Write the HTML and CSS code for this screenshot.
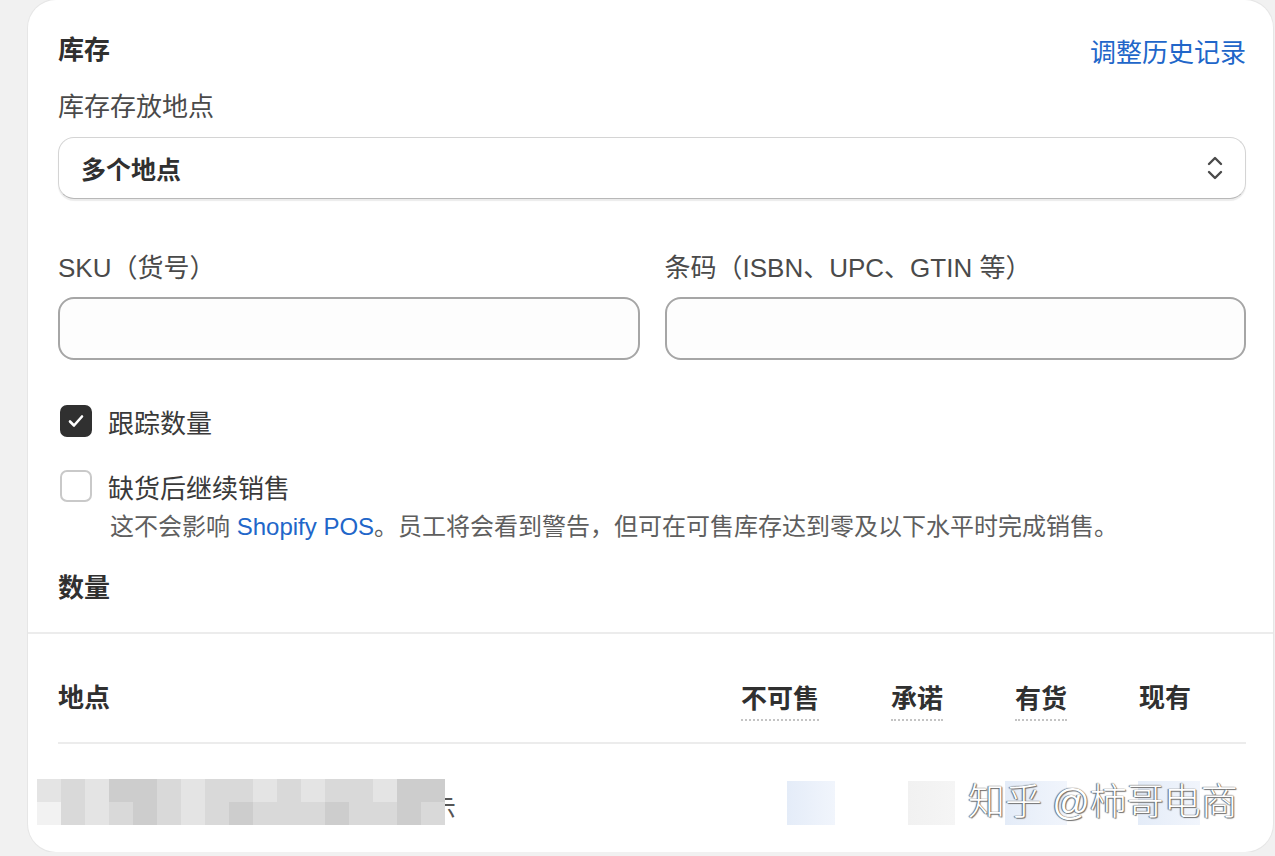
FILE: index.html
```html
<!DOCTYPE html>
<html lang="zh-CN">
<head>
  <meta charset="UTF-8">
  <title>库存</title>
  <meta name="viewport" content="width=device-width, initial-scale=1">
  <link rel="stylesheet" href="styles.css">
</head>
<body>
  <div class="card">
    <div class="section">
      <div class="card-head">
        <h2>库存</h2>
        <a href="#" class="link">调整历史记录</a>
      </div>

      <label class="field-label" for="location">库存存放地点</label>
      <div class="select" id="location">
        <span>多个地点</span>
        <svg class="chevron" width="20" height="30" viewBox="0 0 20 30">
          <path d="M4 11 L10 5 L16 11" fill="none" stroke="#4a4a4a" stroke-width="2.4" stroke-linecap="round" stroke-linejoin="round"/>
          <path d="M4 19 L10 25 L16 19" fill="none" stroke="#4a4a4a" stroke-width="2.4" stroke-linecap="round" stroke-linejoin="round"/>
        </svg>
      </div>

      <div class="field-row">
        <div class="field">
          <label class="field-label" for="sku">SKU（货号）</label>
          <input type="text" id="sku" class="text-input">
        </div>
        <div class="field">
          <label class="field-label" for="barcode">条码（ISBN、UPC、GTIN 等）</label>
          <input type="text" id="barcode" class="text-input">
        </div>
      </div>

      <div class="check-row first">
        <span class="box checked">
          <svg width="24" height="24" viewBox="0 0 24 24">
            <path d="M6 12.5 L10 16.5 L18 7.5" fill="none" stroke="#fff" stroke-width="2.6" stroke-linecap="round" stroke-linejoin="round"/>
          </svg>
        </span>
        <span class="check-label">跟踪数量</span>
      </div>

      <div class="check-row second">
        <span class="box"></span>
        <span class="check-label">缺货后继续销售</span>
      </div>
      <p class="help">这不会影响 <a href="#" class="link">Shopify POS</a>。员工将会看到警告，但可在可售库存达到零及以下水平时完成销售。</p>

      <h3>数量</h3>
    </div>

    <div class="table">
      <div class="table-head">
        <div class="col-name">地点</div>
        <div class="col"><span class="dotted">不可售</span></div>
        <div class="col"><span class="dotted">承诺</span></div>
        <div class="col"><span class="dotted">有货</span></div>
        <div class="col last">现有</div>
      </div>
      <div class="table-row">
        <div class="mosaic">
          <i class="c1"></i><i class="c2"></i><i class="c1"></i><i class="c3"></i><i class="c3"></i><i class="c2"></i><i class="c1"></i><i class="c2"></i><i class="c2"></i><i class="c1"></i><i class="c2"></i><i class="c1"></i><i class="c2"></i><i class="c2"></i><i class="c1"></i><i class="c3"></i><i class="c3"></i>
          <i class="c0"></i><i class="c2"></i><i class="c1"></i><i class="c2"></i><i class="c3"></i><i class="c2"></i><i class="c1"></i><i class="c2"></i><i class="c3"></i><i class="c2"></i><i class="c2"></i><i class="c2"></i><i class="c3"></i><i class="c2"></i><i class="c2"></i><i class="c3"></i><i class="c2"></i>
        </div>
        <span class="cut">示</span>
        <div class="blur blue b1"></div>
        <div class="blur grey b2"></div>
        <div class="blur blue b3"></div>
        <div class="blur blue b4"></div>
      </div>
    </div>

    <div class="watermark">知乎 @柿哥电商</div>
  </div>
</body>
</html>
```

FILE: styles.css
```css
body {
  margin: 0;
  background-color: #f1f1f1;
  font-family: "Liberation Sans", "Noto Sans CJK SC", sans-serif;
  color: #303030;
}
.card {
  position: relative;
  margin-left: 28px;
  width: 1245px;
  height: 852px;
  background-color: #fff;
  border-radius: 28px;
  box-shadow: 0 0 0 1px #e6e6e6;
  overflow: hidden;
}
.section {
  padding: 32px 27px 0 30px;
}
.card-head {
  display: flex;
  justify-content: space-between;
  align-items: center;
  height: 36px;
}
h2, h3 {
  margin: 0;
  font-size: 26px;
  font-weight: bold;
  line-height: 36px;
}
.link {
  color: #2166c9;
  text-decoration: none;
  font-size: 26px;
}
.help .link {
  font-size: 24px;
}
.field-label {
  display: block;
  font-size: 26px;
  line-height: 36px;
  color: #4a4a4a;
}
.card-head + .field-label {
  margin-top: 21px;
}
.select {
  margin-top: 12px;
  height: 60px;
  border: 1px solid #d4d4d4;
  border-bottom-color: #b8b8b8;
  border-radius: 16px;
  display: flex;
  align-items: center;
  justify-content: space-between;
  padding: 0 20px 0 22px;
  font-size: 25px;
  font-weight: bold;
  box-shadow: 0 2px 1px rgba(0, 0, 0, 0.08);
}
.field-row {
  display: flex;
  gap: 25px;
  margin-top: 51px;
}
.field {
  flex: 1;
}
.text-input {
  display: block;
  box-sizing: border-box;
  width: 100%;
  height: 63px;
  margin-top: 11px;
  border: 2px solid #a6a6a6;
  border-radius: 16px;
  background-color: #fdfdfd;
}
.check-row {
  display: flex;
  align-items: center;
  height: 32px;
}
.check-row.first {
  margin-top: 45px;
}
.check-row.second {
  margin-top: 33px;
}
.box {
  box-sizing: border-box;
  width: 32px;
  height: 32px;
  margin-left: 2px;
  border: 2px solid #c9c9c9;
  border-radius: 7px;
  display: flex;
  align-items: center;
  justify-content: center;
}
.box.checked {
  background-color: #303030;
  border-color: #303030;
}
.check-label {
  margin-left: 16px;
  font-size: 26px;
  color: #3a3a3a;
}
.help {
  margin: 9px 0 0 52px;
  font-size: 24px;
  line-height: 32px;
  color: #5e5e5e;
}
h3 {
  margin-top: 27px;
}
.table {
  margin-top: 26px;
  border-top: 2px solid #ececec;
  padding: 0 27px 0 30px;
}
.table-head {
  display: flex;
  align-items: center;
  box-sizing: border-box;
  height: 110px;
  padding-top: 14px;
  border-bottom: 2px solid #ececec;
  font-size: 26px;
  font-weight: bold;
}
.col-name {
  flex: 1;
}
.col {
  margin-left: 72px;
  padding-top: 8px;
}
.col.last {
  padding-top: 0;
  margin-right: 55px;
}
.dotted {
  display: inline-block;
  padding-bottom: 4px;
  border-bottom: 2px dotted #c4c4c4;
}
.table-row {
  position: relative;
  height: 105px;
}
.mosaic {
  position: absolute;
  left: -21px;
  top: 35px;
  display: grid;
  grid-template-columns: repeat(17, 24px);
  grid-auto-rows: 23px;
  z-index: 1;
}
.mosaic i {
  display: block;
}
.c0 { background-color: #f2f2f2; }
.c1 { background-color: #e4e4e4; }
.c2 { background-color: #d9d9d9; }
.c3 { background-color: #cdcdcd; }
.cut {
  position: absolute;
  left: 372px;
  top: 44px;
  font-size: 26px;
  color: #555;
}
.blur {
  position: absolute;
  top: 37px;
  height: 44px;
}
.blue { background: linear-gradient(90deg, #e4ecf8, #f1f5fc); }
.grey { background: linear-gradient(90deg, #f1f1f1, #f5f5f5); }
.b1 { left: 729px; width: 48px; }
.b2 { left: 850px; width: 47px; }
.b3 { left: 947px; width: 62px; }
.b4 { left: 1080px; width: 62px; }
.watermark {
  position: absolute;
  left: 940px;
  top: 780px;
  font-size: 37px;
  line-height: 46px;
  font-weight: 300;
  color: #fff;
  text-shadow: 0 0 1px #444, 1px 1px 1px #777, -1px 0 1px #777;
  z-index: 2;
}
```
